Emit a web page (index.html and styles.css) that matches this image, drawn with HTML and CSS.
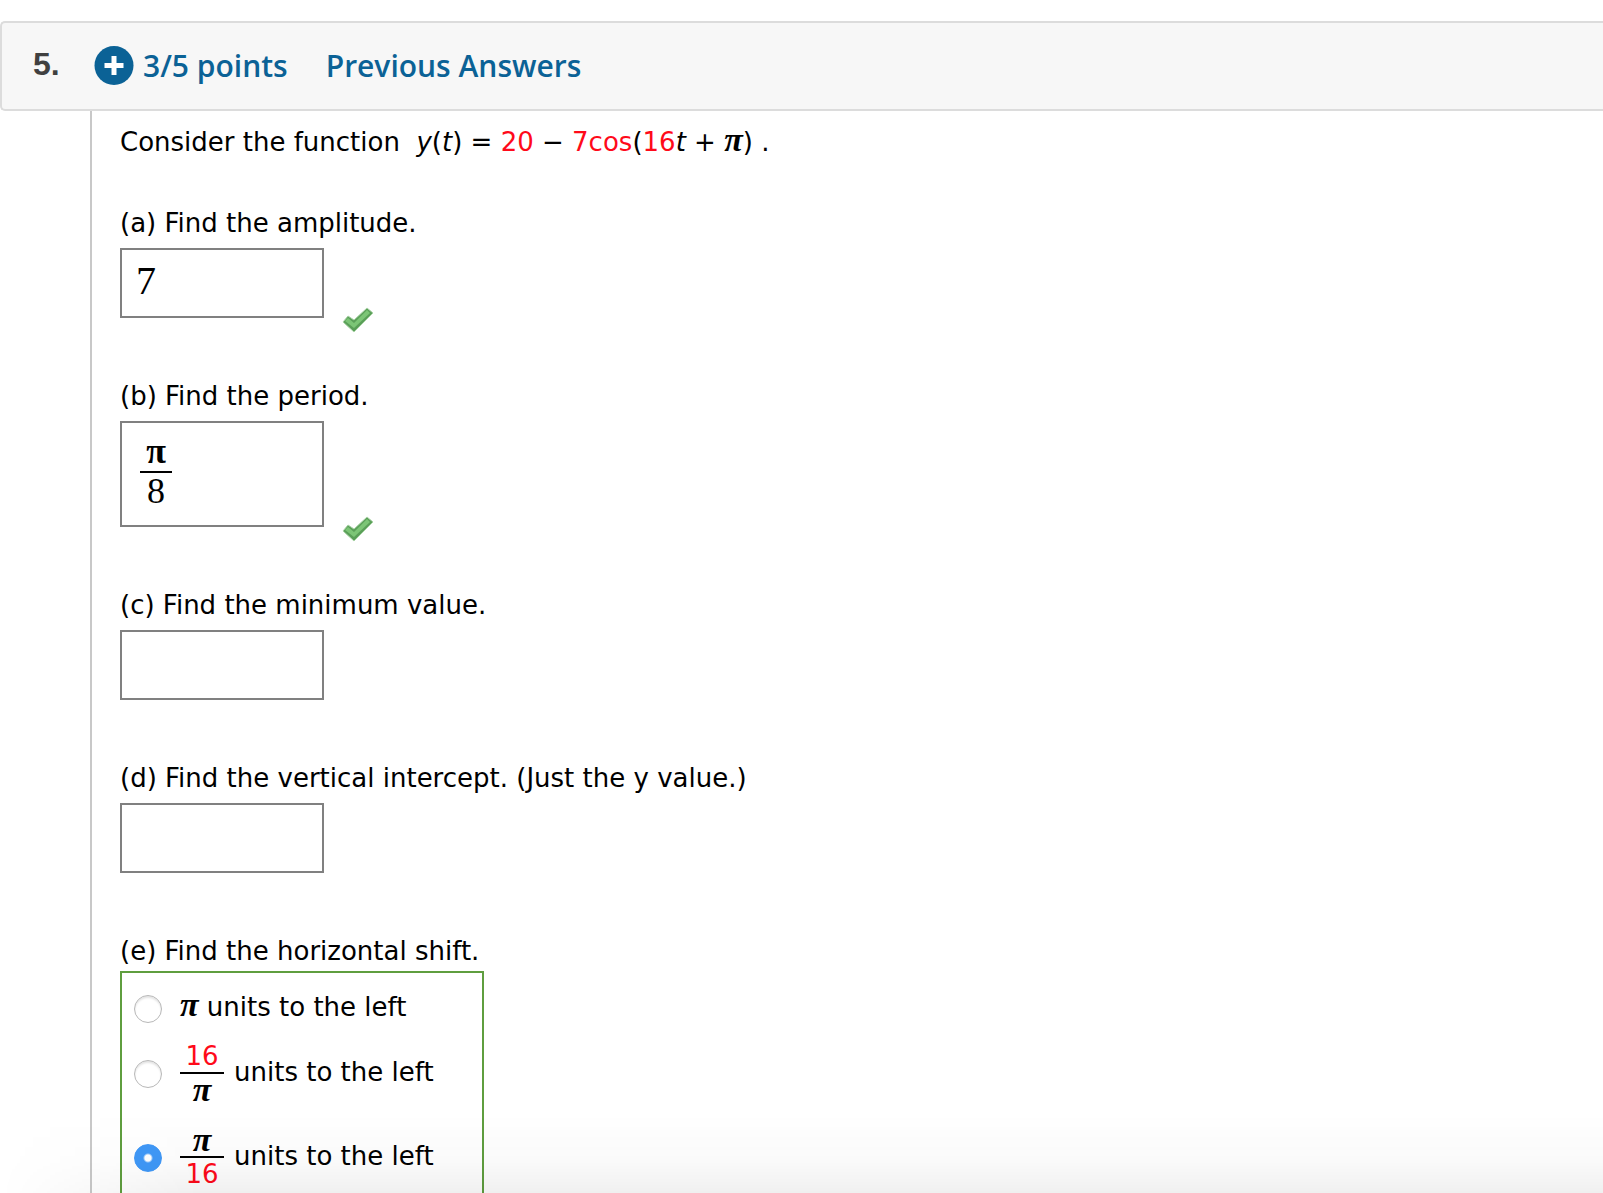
FILE: index.html
```html
<!DOCTYPE html>
<html lang="en">
<head>
<meta charset="utf-8">
<meta name="viewport" content="width=device-width, initial-scale=1">
<title>Question 5</title>
<link rel="stylesheet" href="styles.css">
</head>
<body>

<div class="header">
  <span class="number">5.</span>
  <a class="points" href="#">
    <svg class="plus" viewBox="0 0 40 40" aria-hidden="true">
      <circle cx="20" cy="19.5" r="19.5" fill="#0b6296"/>
      <path d="M20 10v19M10.500 19.500h19" stroke="#fff" stroke-width="5"/>
    </svg>
    3/5 points
  </a>
  <a href="#">Previous Answers</a>
</div>

<div class="question">
  <p class="intro">Consider the function&nbsp; <i>y</i>(<i>t</i>) = <span class="red">20</span> &minus; <span class="red">7cos</span>(<span class="red">16</span><i>t</i> + <span class="pi">&pi;</span>) .</p>

  <div class="part">
    <label for="amplitude">(a) Find the amplitude.</label>
    <div class="answer">
      <input type="text" id="amplitude" class="box" value="7">
      <svg class="check" viewBox="0 0 32 26" role="img" aria-label="Correct">
        <path d="M1 15l5-6 6 4L25 1l6 5-19 19z" fill="#5a9f58" stroke="#a9d3a6" stroke-width="1"/>
        <path d="M3 14l3-3 6 5L25 3l3 3-16 15z" fill="#7cc576"/>
      </svg>
    </div>
  </div>

  <div class="part">
    <div id="periodLabel">(b) Find the period.</div>
    <div class="answer">
      <div class="box tall" role="textbox" tabindex="0" aria-labelledby="periodLabel">
        <span class="frac math"><span class="num">&pi;</span><span class="den">8</span></span>
      </div>
      <svg class="check" viewBox="0 0 32 26" role="img" aria-label="Correct">
        <path d="M1 15l5-6 6 4L25 1l6 5-19 19z" fill="#5a9f58" stroke="#a9d3a6" stroke-width="1"/>
        <path d="M3 14l3-3 6 5L25 3l3 3-16 15z" fill="#7cc576"/>
      </svg>
    </div>
  </div>

  <div class="part">
    <label for="minimum">(c) Find the minimum value.</label>
    <div class="answer"><input type="text" id="minimum" class="box"></div>
  </div>

  <div class="part">
    <label for="intercept">(d) Find the vertical intercept. (Just the y value.)</label>
    <div class="answer"><input type="text" id="intercept" class="box"></div>
  </div>

  <div class="part last">
    <div id="shiftLabel">(e) Find the horizontal shift.</div>
    <div class="choices" role="radiogroup" aria-labelledby="shiftLabel">
      <label class="choice">
        <input type="radio" name="shift">
        <span class="text"><span class="pi">&pi;</span> units to the left</span>
      </label>
      <label class="choice fraction">
        <input type="radio" name="shift">
        <span class="frac"><span class="num red">16</span><span class="den pi">&pi;</span></span>
        <span class="text">units to the left</span>
      </label>
      <label class="choice fraction">
        <input type="radio" name="shift" checked>
        <span class="frac"><span class="num pi">&pi;</span><span class="den red">16</span></span>
        <span class="text">units to the left</span>
      </label>
    </div>
  </div>
</div>

<div class="fade"></div>

</body>
</html>
```
FILE: styles.css
```css
* {
  box-sizing: border-box;
}

body {
  margin: 0;
  height: 100vh;
  padding-top: 21px;
  overflow: hidden;
  display: flex;
  flex-direction: column;
  background-color: white;
  color: black;
  font: 26px/32px Verdana, "DejaVu Sans", sans-serif;
}

/* Header bar */
.header {
  display: flex;
  flex: none;
  align-items: center;
  height: 90px;
  padding-left: 31px;
  border: 2px solid #dcdcdc;
  border-right: none;
  border-radius: 5px 0 0 5px;
  background-color: #f7f7f7;
  font: 600 30px/40px "Open Sans", sans-serif;
}

.header a {
  color: #0b6296;
  text-decoration: none;
}

.number {
  width: 61px;
  padding-bottom: 4px;
  color: #404040;
  font: bold 32px/40px "Liberation Sans", Arial, sans-serif;
}

.points {
  display: flex;
  gap: 9px;
  margin-right: 38px;
}

.plus {
  width: 40px;
  height: 40px;
}

/* Question body */
.question {
  flex: 1;
  min-height: 0;
  display: flex;
  flex-direction: column;
  margin-left: 90px;
  padding: 15px 28px 0;
  border-left: 2px solid #c8c8c8;
}

.intro {
  margin: 0 0 49px;
}

.red {
  color: #ff0a1a;
}

.pi {
  font-family: "Liberation Serif", serif;
  font-size: 34px;
  font-style: italic;
  font-weight: bold;
  line-height: 24px;
}

.part {
  flex: none;
  margin-bottom: 62px;
}

.part > label {
  display: block;
}

.answer {
  display: flex;
  align-items: flex-end;
  gap: 18px;
  margin-top: 9px;
}

.box {
  width: 204px;
  height: 70px;
  padding: 0 14px 6px;
  border: 2px solid #808080;
  border-radius: 0;
  background-color: white;
  color: black;
  font: 40px "Liberation Serif", serif;
}

.tall {
  display: flex;
  align-items: flex-start;
  height: 106px;
  padding: 16px 18px;
}

.check {
  width: 32px;
  height: 26px;
  margin-bottom: -15px;
}

/* Fractions */
.frac {
  display: flex;
  flex: none;
  flex-direction: column;
  width: 44px;
}

.num,
.den {
  height: 34px;
  line-height: 32px;
  text-align: center;
}

.num {
  border-bottom: 2px solid black;
}

.math {
  width: 32px;
  font-size: 36px;
}

.math .num {
  font-weight: bold;
  line-height: 24px;
}

.math .den {
  line-height: 36px;
}

/* Multiple choice */
.choices {
  flex: 1;
  width: 364px;
  margin-top: 4px;
  padding: 13px 12px 0;
  border: 2px solid #5f9e3f;
  border-bottom: none;
}

.choice {
  display: flex;
  align-items: center;
  gap: 18px;
  height: 46px;
}

.fraction {
  gap: 10px;
  height: 84px;
}

.text {
  padding-bottom: 4px;
}

.choice input {
  appearance: none;
  flex: none;
  width: 28px;
  height: 28px;
  margin: 0;
  border: 1px solid #b8b8b8;
  border-radius: 50%;
  background-color: white;
  box-shadow: inset 0 2px 2px #e4e4e4;
}

.fraction input {
  margin-right: 8px;
}

.choice input:checked {
  border-color: #3f98f7;
  background: radial-gradient(circle, white 3px, #3f98f7 5px);
  box-shadow: none;
}

.last {
  display: flex;
  flex: 1;
  flex-direction: column;
  margin-bottom: 0;
}

/* Soft shadow along the bottom of the window */
.fade {
  position: fixed;
  left: 0;
  right: 0;
  bottom: 0;
  height: 80px;
  background: linear-gradient(rgba(0, 0, 0, 0), rgba(0, 0, 0, 0.02) 60%, rgba(0, 0, 0, 0.06));
  -webkit-mask-image: linear-gradient(to right, transparent, black 200px);
  mask-image: linear-gradient(to right, transparent, black 200px);
  pointer-events: none;
}
```
